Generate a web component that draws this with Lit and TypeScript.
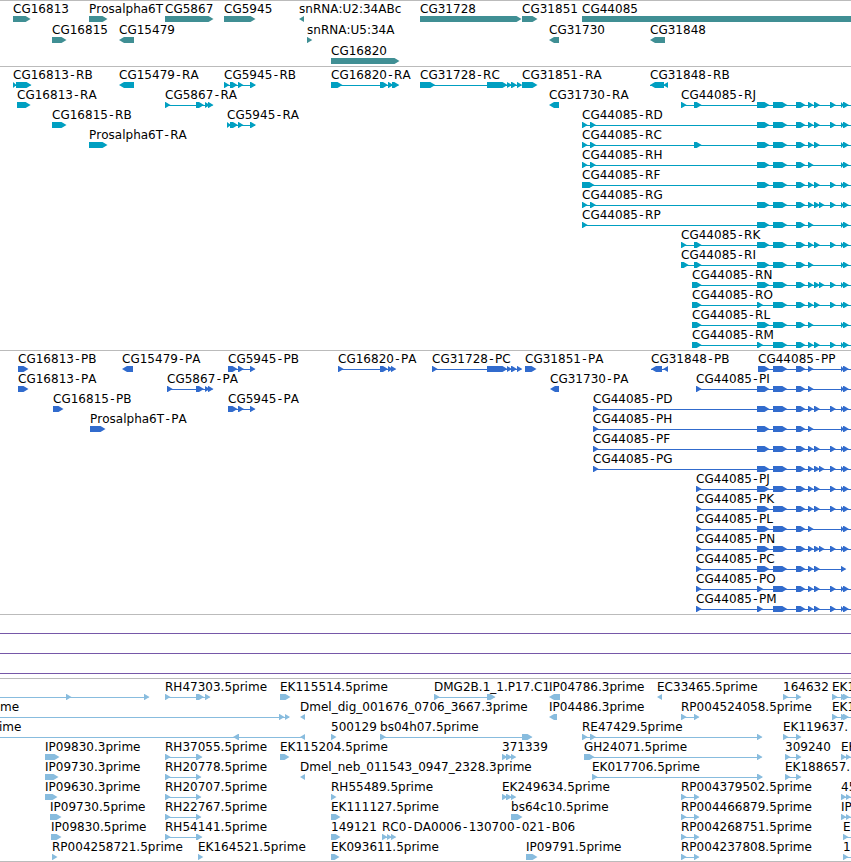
import { LitElement, html, svg, css } from 'lit'
import { customElement, property } from 'lit/decorators.js'

interface Feature {
  row: number
  label: string
  // flat list of start/end pairs
  blocks: number[]
  reverse?: boolean
  // line keeps going past the left or right edge of the view
  openLeft?: boolean
  openRight?: boolean
  labelX?: number
}

const VIEW_WIDTH = 851
const BAR_HEIGHT = 6
const TIP = 5

const fwd = (row: number, label: string, ...blocks: number[]): Feature => ({ row, label, blocks })
const rev = (row: number, label: string, ...blocks: number[]): Feature => ({ row, label, blocks, reverse: true })
const open = (row: number, label: string, ...blocks: number[]): Feature => ({ row, label, blocks, openRight: true })

// exons shared by the CG44085 isoforms
const wide = [757, 769.5, 773, 787.3, 796, 805.5]
const short = [757, 763.3, 773, 787.3, 796, 805.5]
const a = [808, 813.7]
const b = [814, 820]
const c = [819, 824.6]
const d = [830, 836]
const e = [841, 844, 843, 849]

const genes: Feature[] = [
  fwd(0, 'CG16813', 13, 30.6),
  fwd(0, 'Prosalpha6T', 89, 107.5),
  fwd(0, 'CG5867', 165, 213.5),
  fwd(0, 'CG5945', 224, 255.5),
  rev(0, 'snRNA:U2:34ABc', 299, 304),
  fwd(0, 'CG31728', 420, 521.5),
  fwd(0, 'CG31851', 522, 537.5),
  open(0, 'CG44085', 582, 860),
  fwd(1, 'CG16815', 52, 66.5),
  rev(1, 'CG15479', 119, 134),
  fwd(1, 'snRNA:U5:34A', 307, 312.3),
  rev(1, 'CG31730', 549, 559),
  rev(1, 'CG31848', 650, 665),
  fwd(2, 'CG16820', 331, 399.5),
]

const transcripts: Feature[] = [
  fwd(0, 'CG16813-RB', 13, 16.5, 16, 31.5),
  rev(0, 'CG15479-RA', 119, 134),
  fwd(0, 'CG5945-RB', 224, 229.5, 230, 237.5, 238, 243.5, 250, 256),
  fwd(0, 'CG16820-RA', 331, 342.5, 380, 388, 388, 393.5, 392, 399.3),
  fwd(0, 'CG31728-RC', 420, 435.3, 487, 507.5, 507, 512, 511, 517, 517, 522.3),
  fwd(0, 'CG31851-RA', 522, 537.5),
  rev(0, 'CG31848-RB', 650, 664, 663, 668),
  fwd(1, 'CG16813-RA', 17, 30.6),
  fwd(1, 'CG5867-RA', 165, 170.5, 196, 204, 205, 210, 208, 213.5),
  rev(1, 'CG31730-RA', 549, 559),
  open(1, 'CG44085-RJ', 681, 686.7, 694, 701.7, ...wide, ...a, ...b, ...d, ...e),
  fwd(2, 'CG16815-RB', 52, 66.5),
  fwd(2, 'CG5945-RA', 227, 231, 230, 238, 238, 243.5, 250, 256),
  open(2, 'CG44085-RD', 582, 587.7, 590, 596, ...wide, ...a, ...b, ...d, ...e),
  fwd(3, 'Prosalpha6T-RA', 89, 107.5),
  open(3, 'CG44085-RC', 582, 587.7, 590, 596, 694, 701.7, ...wide, ...a, ...b, ...e),
  open(4, 'CG44085-RH', 582, 587.7, 590, 596, ...wide, ...a, ...e),
  open(5, 'CG44085-RF', 582, 594.5, ...wide, ...a, ...b, ...d, ...e),
  open(6, 'CG44085-RG', 582, 587.7, 590, 596, ...wide, ...a, ...b, ...c, ...d, ...e),
  open(7, 'CG44085-RP', 582, 587.7, ...wide, ...a, ...e),
  open(8, 'CG44085-RK', 681, 686.7, 694, 701.7, ...wide, ...a, ...b, ...d, ...e),
  open(9, 'CG44085-RI', 681, 688.7, 694, 701.7, ...wide, ...a, ...e),
  open(10, 'CG44085-RN', 692, 701.7, ...wide, ...a, ...b, ...c, ...d, ...e),
  open(11, 'CG44085-RO', 692, 701.7, ...short, ...a, ...b, ...d, ...e),
  open(12, 'CG44085-RL', 692, 701.7, ...wide, ...a, ...e),
  open(13, 'CG44085-RM', 692, 701.7, ...short, ...a, ...b, ...d, ...e),
]

const proteins: Feature[] = [
  fwd(0, 'CG16813-PB', 18, 28.5),
  rev(0, 'CG15479-PA', 122, 133),
  fwd(0, 'CG5945-PB', 228, 237.5, 238, 244, 250, 255.5),
  fwd(0, 'CG16820-PA', 338, 343.7, 380, 388, 388, 393, 391, 396.3),
  fwd(0, 'CG31728-PC', 432, 437.7, 487, 507.5, 507, 512, 511, 517, 517, 522.3),
  fwd(0, 'CG31851-PA', 525, 536.5),
  rev(0, 'CG31848-PB', 651, 662, 663, 668),
  open(0, 'CG44085-PP', 758, 769.5, ...wide.slice(2), ...a, ...e),
  fwd(1, 'CG16813-PA', 18, 28.5),
  fwd(1, 'CG5867-PA', 167, 172.7, 196, 204, 205, 210, 208, 213.5),
  rev(1, 'CG31730-PA', 550, 559),
  open(1, 'CG44085-PI', 696, 701.7, ...wide, ...a, ...e),
  fwd(2, 'CG16815-PB', 53, 63.5),
  fwd(2, 'CG5945-PA', 228, 237.5, 238, 244, 250, 255.5),
  open(2, 'CG44085-PD', 593, 598.7, ...wide, ...a, ...b, ...d, ...e),
  fwd(3, 'Prosalpha6T-PA', 90, 105.5),
  open(3, 'CG44085-PH', 593, 598.7, ...wide, ...a, ...e),
  open(4, 'CG44085-PF', 593, 598.7, ...wide, ...a, ...b, ...d, ...e),
  open(5, 'CG44085-PG', 593, 598.7, ...wide, ...a, ...b, ...c, ...d, ...e),
  open(6, 'CG44085-PJ', 696, 701.7, ...wide, ...a, ...b, ...d, ...e),
  open(7, 'CG44085-PK', 696, 701.7, ...wide, ...a, ...b, ...d, ...e),
  open(8, 'CG44085-PL', 696, 701.7, ...wide, ...a, ...e),
  open(9, 'CG44085-PN', 696, 701.7, ...wide, ...a, ...b, ...c, ...d, ...e),
  fwd(10, 'CG44085-PC', 696, 701.7, ...wide, ...a, ...b, 841, 846.3),
  open(11, 'CG44085-PO', 696, 701.7, ...short, ...a, ...b, ...d, ...e),
  open(12, 'CG44085-PM', 696, 701.7, ...short, ...a, ...b, ...d, ...e),
]

const ests: Feature[] = [
  { row: 0, label: '', blocks: [66, 71.5, 144, 149.5], openLeft: true },
  fwd(0, 'RH47303.5prime', 165, 170.5, 196, 204, 205, 210.5),
  fwd(0, 'EK115514.5prime', 280, 290.5),
  fwd(0, 'DMG2B.1_1.P17.C1', 434, 439.7, 487, 495.5),
  rev(0, 'IP04786.3prime', 549, 560),
  rev(0, 'EC33465.5prime', 657, 662),
  fwd(0, '164632', 783, 788.5, 796, 801.5),
  open(0, 'EK1', 832, 837.7, 841, 846.5, 843, 849),
  { row: 1, label: 'me', blocks: [279, 284.5, 285, 290], openLeft: true, labelX: 0 },
  rev(1, 'Dmel_dig_001676_0706_3667.3prime', 300, 305),
  rev(1, 'IP04486.3prime', 549, 557),
  fwd(1, 'RP004524058.5prime', 681, 686.7, 694, 699.5),
  open(1, 'EK1', 832, 837.7, 841, 846.5, 843, 849),
  { row: 2, label: 'ime', blocks: [233, 239, 300, 305], reverse: true, openLeft: true, labelX: -1 },
  fwd(2, '500129', 331, 336.5),
  fwd(2, 'bs04h07.5prime', 380, 386, 522, 532.5),
  fwd(2, 'RE47429.5prime', 582, 587.7, 590, 596, 757, 762.5),
  fwd(2, 'EK119637.', 783, 788.5, 796, 801.5),
  fwd(3, 'IP09830.3prime', 45, 59.5),
  fwd(3, 'RH37055.5prime', 165, 170.7, 196, 202.5),
  fwd(3, 'EK115204.5prime', 280, 289.5),
  fwd(3, '371339', 502, 507.5, 506, 512, 511, 516.3),
  fwd(3, 'GH24071.5prime', 584, 594.5, 757, 762.5),
  fwd(3, '309240', 785, 790.5, 796, 801.5),
  open(3, 'EK', 841, 846.5, 846, 851),
  fwd(4, 'IP09730.3prime', 45, 58.5),
  fwd(4, 'RH20778.5prime', 165, 170.7, 196, 201.5),
  rev(4, 'Dmel_neb_011543_0947_2328.3prime', 300, 305),
  fwd(4, 'EK017706.5prime', 592, 597.7, 757, 763),
  fwd(4, 'EK188657.', 785, 790.5, 796, 801.5),
  fwd(5, 'IP09630.3prime', 45, 57.5),
  fwd(5, 'RH20707.5prime', 165, 170.7, 196, 201.5),
  fwd(5, 'RH55489.5prime', 331, 336.5),
  fwd(5, 'EK249634.5prime', 502, 507.5, 506, 512, 511, 516.3),
  fwd(5, 'RP004379502.5prime', 681, 686.7, 694, 699.5),
  open(5, '45', 841, 846.5, 846, 851),
  fwd(6, 'IP09730.5prime', 50, 61.5),
  fwd(6, 'RH22767.5prime', 165, 170.7, 196, 201.5),
  fwd(6, 'EK111127.5prime', 331, 340.5),
  fwd(6, 'bs64c10.5prime', 511, 522.5),
  fwd(6, 'RP004466879.5prime', 681, 686.7, 694, 699.5),
  open(6, 'IP', 841, 846.5, 846, 851),
  fwd(7, 'IP09830.5prime', 51, 61.5),
  fwd(7, 'RH54141.5prime', 165, 170.7, 196, 202.5),
  fwd(7, '149121', 331, 340.5),
  fwd(7, 'RC0-DA0006-130700-021-B06', 382, 387.5, 387, 392, 391, 396.3),
  fwd(7, 'RP004268751.5prime', 681, 686.7, 694, 699.5),
  open(7, 'E', 843, 848.5),
  fwd(8, 'RP004258721.5prime', 52, 57.5),
  fwd(8, 'EK164521.5prime', 198, 203.3),
  fwd(8, 'EK093611.5prime', 331, 339.5),
  fwd(8, 'IP09791.5prime', 526, 537.5),
  fwd(8, 'RP004237808.5prime', 681, 686.7, 694, 699.5),
  open(8, '1', 843, 848.5),
]

@customElement('feature-track')
export class FeatureTrack extends LitElement {
  @property({ attribute: false }) features: Feature[] = []
  @property({ type: Number }) height = 0
  @property({ type: Number }) pitch = 20

  static styles = css`
  :host {
    display: block;
    border-top: 1px solid #bbb;
    color: var(--track-color);
  }
  svg {
    display: block;
    overflow: hidden;
  }
  text {
    font: 12px "DejaVu Sans", sans-serif;
    font-kerning: none;
    fill: #000;
  }
  polygon, rect {
    fill: currentColor;
  }
  `

  arrow(start: number, end: number, y: number, reverse = false) {
    const tip = Math.min(TIP, end - start)
    const bottom = y + BAR_HEIGHT
    const mid = y + BAR_HEIGHT / 2
    const points = reverse
      ? `${end},${y} ${start + tip},${y} ${start},${mid} ${start + tip},${bottom} ${end},${bottom}`
      : `${start},${y} ${end - tip},${y} ${end},${mid} ${end - tip},${bottom} ${start},${bottom}`
    return svg`<polygon points=${points}></polygon>`
  }

  // extra room on both sides of every hyphen
  spacing(label: string) {
    return [...label].map((ch, i) => (ch === '-' || label[i - 1] === '-' ? 1.4 : 0)).join(' ')
  }

  feature(f: Feature) {
    const top = f.row * this.pitch
    const barY = top + 15
    const pairs: number[][] = []
    for (let i = 0; i < f.blocks.length; i += 2) {
      pairs.push([f.blocks[i], f.blocks[i + 1]])
    }
    const left = f.openLeft ? 0 : f.blocks[0]
    const right = f.openRight ? VIEW_WIDTH : f.blocks[f.blocks.length - 1] - 1
    const hasLine = pairs.length > 1 || f.openLeft || f.openRight
    return svg`
      ${hasLine ? svg`<rect x=${left} y=${barY + 3} width=${right - left} height="1"></rect>` : ''}
      ${pairs.map(([s, t]) => this.arrow(s, t, barY, f.reverse))}
      <text x=${f.labelX ?? f.blocks[0]} y=${top + 12} dx=${this.spacing(f.label)}>${f.label}</text>
    `
  }

  render() {
    return html`
    <svg width=${VIEW_WIDTH} height=${this.height}>
      ${this.features.map((f) => this.feature(f))}
    </svg>
    `
  }
}

@customElement('app-root')
export class AppRoot extends LitElement {
  static styles = css`
  :host {
    display: flex;
    flex-direction: column;
    width: 851px;
    height: 862px;
    overflow: hidden;
    background: #fff;
  }
  .genes {
    --track-color: #408f94;
  }
  .transcripts {
    --track-color: #009fc1;
  }
  .proteins {
    --track-color: #316bcd;
  }
  .ests {
    --track-color: #88bcde;
    border-bottom: 1px solid #bbb;
  }
  .coverage {
    display: flex;
    flex-direction: column;
    gap: 19px;
    box-sizing: border-box;
    height: 64px;
    padding-top: 18px;
    border-top: 1px solid #bbb;
  }
  .level {
    height: 1px;
    background: #7658a8;
  }
  `

  render() {
    return html`
    <feature-track class="genes" .features=${genes} .height=${65} .pitch=${21}></feature-track>
    <feature-track class="transcripts" .features=${transcripts} .height=${283}></feature-track>
    <feature-track class="proteins" .features=${proteins} .height=${263}></feature-track>
    <div class="coverage">
      <div class="level"></div>
      <div class="level"></div>
      <div class="level"></div>
    </div>
    <feature-track class="ests" .features=${ests} .height=${182}></feature-track>
    `
  }
}
